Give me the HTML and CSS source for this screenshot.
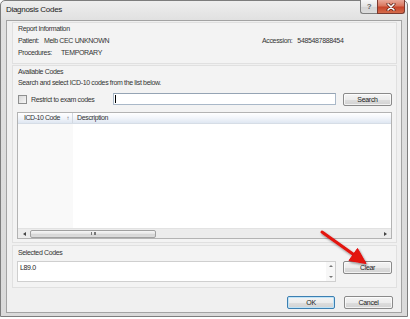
FILE: index.html
```html
<!DOCTYPE html>
<html lang="en">
<head>
  <meta charset="UTF-8" />
  <title>Diagnosis Codes</title>
  <link rel="stylesheet" href="styles.css">
</head>
<body>

  <div class="window">
    <div class="titlebar">
      <span class="title">Diagnosis Codes</span>
      <div class="caption-buttons">
        <span class="cap-btn help">?</span>
        <span class="cap-btn close">
          <svg width="10" height="8" viewBox="0 0 10 8">
            <path d="M2 1 L8 7 M8 1 L2 7" stroke="#5a1a10" stroke-width="3" stroke-linecap="round"/>
            <path d="M2 1 L8 7 M8 1 L2 7" stroke="#fff" stroke-width="1.6" stroke-linecap="round"/>
          </svg>
        </span>
      </div>
    </div>

    <div class="client">
      <!-- Report information -->
      <section class="panel report">
        <div class="line">Report Information</div>
        <div class="info-grid">
          <div class="pair"><span>Patient:</span><span>Melb CEC UNKNOWN</span></div>
          <div class="pair"><span>Accession:</span><span>5485487888454</span></div>
          <div class="pair wide"><span>Procedures:</span><span>TEMPORARY</span></div>
        </div>
      </section>

      <!-- Available codes -->
      <section class="panel available">
        <div class="caption">Available Codes</div>
        <div class="line">Search and select ICD-10 codes from the list below.</div>
        <div class="search-row">
          <label class="check-label"><span class="checkbox"></span>Restrict to exam codes</label>
          <div class="textbox"><span class="caret"></span></div>
          <button class="btn">Search</button>
        </div>
        <div class="grid">
          <div class="grid-head">
            <div class="col-code"><span>ICD-10 Code</span><span class="sort">&#8593;</span></div>
            <div class="col-desc">Description</div>
          </div>
          <div class="grid-body">
            <div class="col-code"></div>
            <div class="col-desc"></div>
          </div>
          <div class="hscroll">
            <span class="arrow left"></span>
            <div class="track"><div class="thumb"><span class="grip"></span></div></div>
            <span class="arrow right"></span>
          </div>
        </div>
      </section>

      <!-- Selected codes -->
      <section class="panel selected">
        <div class="line caption-sel">Selected Codes</div>
        <div class="selected-row">
          <div class="code-box">
            <div class="codes">L89.0</div>
            <div class="vscroll">
              <span class="arrow up"></span>
              <span class="arrow down"></span>
            </div>
          </div>
          <button class="btn">Clear</button>
        </div>
      </section>

      <div class="footer">
        <button class="btn default">OK</button>
        <button class="btn">Cancel</button>
      </div>
    </div>

    <svg class="annotation" width="410" height="319" viewBox="0 0 410 319">
      <defs>
        <filter id="shadow" x="-20%" y="-20%" width="140%" height="140%">
          <feDropShadow dx="1" dy="1.5" stdDeviation="1" flood-color="#000" flood-opacity="0.45"/>
        </filter>
      </defs>
      <g filter="url(#shadow)" fill="#e3120f" stroke="#e3120f">
        <line x1="322" y1="232" x2="355" y2="255.5" stroke-width="3" stroke-linecap="round"/>
        <polygon points="366,263.5 349,260.5 357.5,248.5" stroke-width="1" stroke-linejoin="round"/>
      </g>
    </svg>
  </div>

</body>
</html>
```

FILE: styles.css
```css
* {
  box-sizing: border-box;
}

body {
  margin: 0;
  font-family: "Liberation Sans", Arial, sans-serif;
  font-size: 7px;
  letter-spacing: -0.35px;
  color: #333;
  background-color: #fff;
  white-space: nowrap;
}

.window {
  position: relative;
  width: 408px;
  height: 317px;
  border: 1px solid #7d7d7d;
  border-radius: 5px 5px 0 0;
  background: linear-gradient(#eeeeee, #e0e0e0 20px, #dadada);
  padding: 0 5px 3px;
  display: flex;
  flex-direction: column;
}

/* Title bar */
.titlebar {
  height: 19px;
  display: flex;
  justify-content: space-between;
  align-items: flex-start;
  margin-right: -3px;
}

.title {
  font-size: 8px;
  letter-spacing: -0.3px;
  line-height: 17px;
  color: #222;
}

.caption-buttons {
  display: flex;
  margin-top: -1px;
  height: 14px;
}

.cap-btn {
  display: flex;
  align-items: center;
  justify-content: center;
  height: 14px;
  border: 1px solid #7f7f7f;
  border-top: none;
}

.cap-btn.help {
  width: 17px;
  border-right: none;
  border-radius: 0 0 0 3px;
  background: linear-gradient(#f7f7f7, #e3e3e3 50%, #d3d3d3 51%, #dcdcdc);
  color: #666;
  font-size: 8px;
  font-weight: bold;
}

.cap-btn.close {
  width: 28px;
  border-radius: 0 0 3px 0;
  border-color: #7a3a30;
  background: linear-gradient(#e9a99a, #d9775f 45%, #c7442a 55%, #d46c4c);
}

/* Client area */
.client {
  flex: 1;
  border: 1px solid #a3a3a3;
  background-color: #f0f0f0;
  padding: 1px 4px 0 5px;
  display: flex;
  flex-direction: column;
}

.panel {
  border: 1px solid #e0e0e0;
  background-color: #f3f3f3;
  padding: 0 4px 0 5px;
}

.line {
  line-height: 12px;
}

.report {
  height: 42px;
}

.info-grid {
  display: grid;
  grid-template-columns: 244px 1fr;
}

.pair {
  display: flex;
  gap: 5px;
  line-height: 12px;
}

.pair.wide {
  gap: 9px;
}

.available {
  height: 178px;
  margin-top: 1px;
}

.caption {
  line-height: 11px;
}

.search-row {
  display: flex;
  align-items: center;
  height: 14px;
  margin-top: 3px;
}

.check-label {
  flex: 1;
  display: flex;
  align-items: center;
}

.checkbox {
  width: 9px;
  height: 9px;
  margin-right: 4px;
  border: 1px solid #8e8f8f;
  background: linear-gradient(135deg, #d8d8d8, #f6f6f6);
}

.textbox {
  width: 223px;
  height: 12px;
  align-self: flex-start;
  margin-top: 1px;
  border: 1px solid #a9b8c8;
  border-top-color: #95a4b4;
  background-color: #fff;
  padding: 1px 0 0 1px;
}

.caret {
  display: block;
  width: 1px;
  height: 8px;
  background-color: #000;
}

.btn {
  height: 13px;
  padding: 0;
  font-family: inherit;
  font-size: 7px;
  letter-spacing: -0.3px;
  line-height: 11px;
  color: #222;
  border: 1px solid #8a8a8a;
  border-radius: 2px;
  background: linear-gradient(#f4f4f4, #ececec 50%, #dedede 51%, #d2d2d2);
  box-shadow: inset 0 0 0 1px rgba(255, 255, 255, 0.7);
}

.search-row .btn {
  width: 49px;
  margin-left: 7px;
}

/* List */
.grid {
  margin: 6px 0 0 -1px;
  height: 127px;
  border: 1px solid #b3b3b3;
  background-color: #fff;
  display: flex;
  flex-direction: column;
}

.grid-head {
  height: 11px;
  display: flex;
  background: linear-gradient(#ffffff, #f2f5fa 50%, #dfe7f2);
  border-bottom: 1px solid #d6dde6;
  line-height: 10px;
}

.grid-head .col-code {
  width: 55px;
  padding: 0 3px 0 6px;
  display: flex;
  justify-content: space-between;
  letter-spacing: -0.45px;
  border-right: 1px solid #d2d8e0;
}

.sort {
  font-size: 6px;
  color: #555;
  margin-left: 3px;
}

.grid-head .col-desc {
  padding-left: 4px;
}

.grid-body {
  flex: 1;
  display: flex;
}

.grid-body .col-code {
  width: 55px;
  background-color: #f9f9f9;
}

.grid-body .col-desc {
  flex: 1;
}

.hscroll {
  height: 10px;
  display: flex;
  align-items: center;
  background-color: #ececec;
  border-top: 1px solid #e2e2e2;
}

.arrow {
  display: block;
  width: 0;
  height: 0;
  border: 2.5px solid transparent;
}

.hscroll .arrow {
  margin: 0 4px 0 5px;
}

.arrow.left {
  border-right: 3px solid #444;
  border-left-width: 0;
}

.arrow.right {
  border-left: 3px solid #444;
  border-right-width: 0;
}

.track {
  flex: 1;
  height: 8px;
}

.thumb {
  width: 126px;
  height: 8px;
  border: 1px solid #a0a0a0;
  border-radius: 2px;
  background: linear-gradient(#f6f6f6, #e4e4e4 50%, #d6d6d6 51%, #dcdcdc);
  display: flex;
  justify-content: center;
  align-items: center;
}

.grip {
  width: 5px;
  height: 3px;
  border-left: 1px solid #777;
  border-right: 1px solid #777;
  background: linear-gradient(90deg, transparent 1.5px, #777 1.5px, #777 2.5px, transparent 2.5px);
}

/* Selected codes */
.selected {
  height: 43px;
  margin-top: 2px;
}

.caption-sel {
  padding-top: 1px;
  line-height: 12px;
  height: 13px;
}

.selected-row {
  display: flex;
  align-items: flex-start;
  margin-top: 2px;
}

.code-box {
  width: 319px;
  height: 21px;
  margin-left: -1px;
  border: 1px solid #cfcfcf;
  background-color: #fff;
  display: flex;
}

.codes {
  flex: 1;
  padding: 1px 0 0 2px;
  line-height: 9px;
  color: #222;
}

.vscroll {
  width: 9px;
  display: flex;
  flex-direction: column;
  justify-content: space-between;
  align-items: center;
  padding: 3px 0;
  background-color: #f7f7f7;
}

.arrow.up {
  border-bottom: 2px solid #777;
  border-top-width: 0;
}

.arrow.down {
  border-top: 2px solid #777;
  border-bottom-width: 0;
}

.selected-row .btn {
  width: 49px;
  margin-left: 7px;
}

/* Footer */
.footer {
  height: 23px;
  display: flex;
  justify-content: flex-end;
  gap: 9px;
  padding: 8px 4px 0 0;
}

.footer .btn {
  width: 49px;
}

.footer .btn.default {
  width: 48px;
  border-color: #3c7fb1;
  box-shadow: inset 0 0 0 1px #bfe3f7;
}

/* Annotation */
.annotation {
  position: absolute;
  left: -1px;
  top: -1px;
  pointer-events: none;
}
```
